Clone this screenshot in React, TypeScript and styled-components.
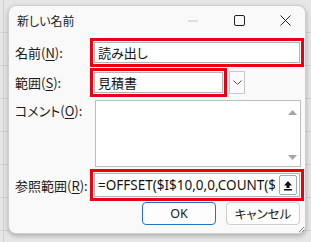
import styled, { createGlobalStyle } from "styled-components";

const GlobalStyle = createGlobalStyle`
  html, body {
    margin: 0;
    padding: 0;
    background: #e4e4e4;
  }
  body {
    font-family: "Noto Sans", "Noto Sans CJK JP", sans-serif;
    font-feature-settings: "palt";
  }
`;

const Sheet = styled.div`
  width: 311px;
  height: 242px;
  box-sizing: border-box;
  padding: 5px 0 0 8px;
  background-color: #e6e6e6;
  background-image:
    linear-gradient(to right, transparent 3px, #cfcfcf 3px, #cfcfcf 4px, transparent 4px),
    repeating-linear-gradient(to bottom, transparent 0, transparent 32px, #d2d2d2 32px, #d2d2d2 33px);
  overflow: hidden;
`;

const Dialog = styled.div`
  width: 298px;
  height: 229px;
  background: #f9f9f9;
  border: 1px solid #cfcfcf;
  border-radius: 8px;
  box-sizing: border-box;
  box-shadow: 0 2px 5px rgba(0, 0, 0, 0.25);
  position: relative;
  display: flex;
  flex-direction: column;
  color: #1a1a1a;
`;

const TitleBar = styled.div`
  height: 29px;
  display: flex;
  align-items: center;
  padding-left: 8px;
`;

const Title = styled.div`
  flex: 1;
  font-family: "Noto Sans CJK JP", sans-serif;
  font-size: 12px;
  color: #222;
`;

const Controls = styled.div`
  display: flex;
  margin-right: -3px;
`;

const WinButton = styled.div`
  width: 46px;
  height: 29px;
  display: flex;
  align-items: center;
  justify-content: center;
`;

const Form = styled.div`
  padding: 3px 1px 0 6px;
  display: flex;
  flex-direction: column;
`;

const Row = styled.div<{ $top?: number; $h: number }>`
  display: grid;
  grid-template-columns: 75px minmax(0, 1fr);
  margin-top: ${(p) => p.$top ?? 0}px;
  height: ${(p) => p.$h}px;
`;

const Label = styled.div<{ $alignTop?: boolean }>`
  font-family: "Noto Sans CJK JP", sans-serif;
  font-size: 13px;
  color: #1a1a1a;
  display: flex;
  align-items: ${(p) => (p.$alignTop ? "flex-start" : "center")};
  padding-top: ${(p) => (p.$alignTop ? "1px" : "0")};
  white-space: nowrap;
  u {
    text-decoration: underline;
    text-underline-offset: 2px;
  }
`;

const Field = styled.div`
  display: flex;
  align-items: center;
  gap: 2px;
`;

const RedBox = styled.div<{ $w?: number }>`
  border: 3px solid #ec0010;
  box-sizing: border-box;
  height: 100%;
  width: ${(p) => (p.$w ? `${p.$w}px` : "100%")};
  min-width: 0;
  padding: 1px;
  display: flex;
`;

const Input = styled.div<{ $latin?: boolean }>`
  flex: 1;
  min-width: 0;
  background: #fff;
  border: 1px solid #b4b4b4;
  display: flex;
  align-items: center;
  padding-left: 3px;
  overflow: hidden;
  white-space: nowrap;
  font-family: ${(p) =>
    p.$latin ? '"Noto Sans", "Noto Sans CJK JP", sans-serif' : '"Noto Sans CJK JP", sans-serif'};
  font-size: ${(p) => (p.$latin ? "13.5px" : "13px")};
  color: #111;
`;

const InputText = styled.span`
  flex: 1;
  min-width: 0;
  overflow: hidden;
`;

const DropButton = styled.div`
  width: 16px;
  height: 23px;
  box-sizing: border-box;
  border: 1px solid #c8c8c8;
  background: #fbfbfb;
  display: flex;
  align-items: center;
  justify-content: center;
`;

const TextArea = styled.div`
  margin: 0 3px 0 5px;
  background: #fff;
  border: 1px solid #bdbdbd;
  display: flex;
  justify-content: flex-end;
`;

const ScrollTrack = styled.div`
  width: 16px;
  display: flex;
  flex-direction: column;
  justify-content: space-between;
  align-items: center;
  padding: 9px 0 6px;
`;

const RefButton = styled.div`
  flex: none;
  width: 18px;
  height: 20px;
  box-sizing: border-box;
  border: 1px solid #a8a8a8;
  border-radius: 2px;
  background: #fdfdfd;
  display: flex;
  align-items: center;
  justify-content: center;
  margin: 1px 2px 1px 4px;
`;

const Buttons = styled.div`
  display: flex;
  justify-content: flex-end;
  gap: 10px;
  margin-top: 4px;
  padding-right: 4px;
`;

const Button = styled.div<{ $primary?: boolean }>`
  width: 74px;
  height: 23px;
  box-sizing: border-box;
  border: 1px solid ${(p) => (p.$primary ? "#1f73c9" : "#cfcfcf")};
  border-radius: 4px;
  background: #fdfdfd;
  display: flex;
  align-items: center;
  justify-content: center;
  font-family: "Noto Sans", "Noto Sans CJK JP", sans-serif;
  font-size: 12.5px;
  color: #1a1a1a;
`;

const Grip = styled.svg`
  position: absolute;
  right: 0;
  bottom: 0;
`;

export default function App() {
  return (
    <>
      <GlobalStyle />
      <Sheet>
        <Dialog>
          <TitleBar>
            <Title>新しい名前</Title>
            <Controls>
              <WinButton>
                <svg width="11" height="2" viewBox="0 0 11 2">
                  <line x1="0" y1="1" x2="10" y2="1" stroke="#c4c4c4" strokeWidth="1" />
                </svg>
              </WinButton>
              <WinButton>
                <svg width="11" height="11" viewBox="0 0 11 11">
                  <rect x="0.5" y="0.5" width="10" height="10" rx="1.5" fill="none" stroke="#222" strokeWidth="1" />
                </svg>
              </WinButton>
              <WinButton>
                <svg width="11" height="11" viewBox="0 0 11 11">
                  <path d="M0.5 0.5 L10.5 10.5 M10.5 0.5 L0.5 10.5" stroke="#222" strokeWidth="1" />
                </svg>
              </WinButton>
            </Controls>
          </TitleBar>
          <Form>
            <Row $h={28}>
              <Label>
                名前(<u>N</u>):
              </Label>
              <RedBox>
                <Input>読み出し</Input>
              </RedBox>
            </Row>
            <Row $top={2} $h={27}>
              <Label>
                範囲(<u>S</u>):
              </Label>
              <Field>
                <RedBox $w={137}>
                  <Input>見積書</Input>
                </RedBox>
                <DropButton>
                  <svg width="9" height="5" viewBox="0 0 9 5">
                    <path d="M0.5 0.5 L4.5 4.5 L8.5 0.5" fill="none" stroke="#555" strokeWidth="1" />
                  </svg>
                </DropButton>
              </Field>
            </Row>
            <Row $top={5} $h={67}>
              <Label $alignTop>
                コメント(<u>O</u>):
              </Label>
              <TextArea>
                <ScrollTrack>
                  <svg width="9" height="5" viewBox="0 0 9 5">
                    <path d="M0 5 L4.5 0 L9 5 Z" fill="#a6a6a6" />
                  </svg>
                  <svg width="9" height="5" viewBox="0 0 9 5">
                    <path d="M0 0 L4.5 5 L9 0 Z" fill="#a6a6a6" />
                  </svg>
                </ScrollTrack>
              </TextArea>
            </Row>
            <Row $top={2} $h={29}>
              <Label>
                参照範囲(<u>R</u>):
              </Label>
              <RedBox>
                <Input $latin>
                  <InputText>=OFFSET($I$10,0,0,COUNT($I:$I)-1,1)</InputText>
                  <RefButton>
                    <svg width="10" height="11" viewBox="0 0 10 11">
                      <path d="M5 1 L9 5.5 L6.5 5.5 L6.5 8 L3.5 8 L3.5 5.5 L1 5.5 Z" fill="#111" />
                      <rect x="1" y="9" width="8" height="1.5" fill="#111" />
                    </svg>
                  </RefButton>
                </Input>
              </RedBox>
            </Row>
            <Buttons>
              <Button $primary>OK</Button>
              <Button>キャンセル</Button>
            </Buttons>
          </Form>
          <Grip width="8" height="8" viewBox="0 0 8 8">
            <path d="M7 2 L2 7 M7 5 L5 7" stroke="#8a8a8a" strokeWidth="1" />
          </Grip>
        </Dialog>
      </Sheet>
    </>
  );
}
